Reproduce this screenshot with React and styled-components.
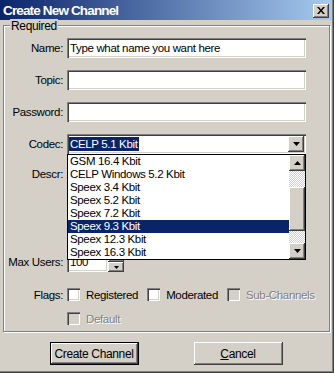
import React from "react";
import styled, { createGlobalStyle, css } from "styled-components";

const GlobalStyle = createGlobalStyle`
  html, body { margin: 0; padding: 0; background: #d4d0c8; }
  body { font-family: "Liberation Sans", Arial, sans-serif; }
  * { box-sizing: border-box; }
`;

const sunken = css`
  box-shadow: inset 1px 1px #808080, inset 2px 2px #404040,
    inset -1px -1px #fff, inset -2px -2px #d4d0c8;
`;
const raised = css`
  box-shadow: inset -1px -1px #404040, inset 1px 1px #fff,
    inset -2px -2px #808080, inset 2px 2px #d4d0c8;
`;

const Window = styled.div`
  width: 334px;
  height: 373px;
  background: #d4d0c8;
  padding: 0 2px 2px 0;
  box-shadow: inset -1px -1px #404040, inset -2px -2px #808080;
  display: flex;
  flex-direction: column;
  font-size: 11.5px;
  letter-spacing: -0.35px;
  color: #000;
`;

const TitleBar = styled.div`
  height: 20px;
  flex: none;
  display: flex;
  align-items: center;
  justify-content: space-between;
  padding: 0 3px 0 3px;
  background: linear-gradient(to right, #0a246a, #a6caf0);
`;

const Title = styled.span`
  color: #fff;
  font-weight: bold;
  font-size: 13.5px;
  letter-spacing: -0.85px;
`;

const CloseButton = styled.div`
  width: 16px;
  height: 14px;
  margin-top: 1px;
  background: #d4d0c8;
  ${raised};
  display: flex;
  align-items: center;
  justify-content: center;
`;

const Group = styled.div`
  margin: 5px 2px 0 3px;
  border: 1px solid #808080;
  box-shadow: inset 1px 1px #fff, 1px 1px #fff;
  padding: 0 0 6px 1px;
`;

const Legend = styled.div`
  width: fit-content;
  margin: -7px 0 0 5px;
  padding: 0 1px;
  background: #d4d0c8;
  line-height: 14px;
  font-size: 12px;
`;

const Form = styled.div`
  display: flex;
  flex-direction: column;
  margin-top: 5px;
`;

const Row = styled.div`
  display: flex;
  align-items: ${(p) => (p.$top ? "flex-start" : "center")};
  gap: 4px;
  margin-top: ${(p) => p.$mt || 0}px;
`;

const Label = styled.div`
  width: 58px;
  flex: none;
  text-align: right;
  padding-top: ${(p) => (p.$top ? 2 : 0)}px;
  white-space: nowrap;
`;

const TextField = styled.div`
  width: ${(p) => p.$w || 239}px;
  height: ${(p) => p.$h || 20}px;
  background: #fff;
  ${sunken};
  padding: 0 3px;
  line-height: 20px;
  white-space: nowrap;
  overflow: hidden;
`;

const Combo = styled.div`
  position: relative;
  width: 239px;
  height: 20px;
  background: #fff;
  ${sunken};
  display: flex;
  align-items: center;
  padding: 2px;
`;

const ComboValue = styled.div`
  flex: 1;
  display: flex;
  align-items: center;
`;

const Highlight = styled.span`
  background: #0a246a;
  color: #fff;
  height: 14px;
  line-height: 14px;
  padding: 0 2px 0 1px;
`;

const ArrowButton = styled.div`
  width: 16px;
  height: ${(p) => p.$h || 16}px;
  flex: none;
  background: #d4d0c8;
  ${raised};
  display: flex;
  align-items: center;
  justify-content: center;
`;

const DropList = styled.div`
  position: absolute;
  top: 20px;
  left: 0;
  width: 239px;
  height: 106px;
  border: 1px solid #000;
  background: #fff;
  display: flex;
  z-index: 2;
`;

const Items = styled.div`
  flex: 1;
  display: flex;
  flex-direction: column;
`;

const Item = styled.div`
  height: 13px;
  line-height: 13px;
  padding-left: 2px;
  white-space: nowrap;
  background: ${(p) => (p.$selected ? "#0a246a" : "transparent")};
  color: ${(p) => (p.$selected ? "#fff" : "#000")};
`;

const ScrollBar = styled.div`
  width: 16px;
  display: flex;
  flex-direction: column;
`;

const Track = styled.div`
  flex: 1;
  background: repeating-conic-gradient(#d4d0c8 0 25%, #fff 0 50%) 0 0 / 2px 2px;
`;

const Thumb = styled.div`
  margin-top: 16px;
  height: 44px;
  background: #d4d0c8;
  ${raised};
`;

const Spin = styled.div`
  display: flex;
  align-items: flex-end;
`;

const SpinButtons = styled.div`
  display: flex;
  flex-direction: column;
  width: 14px;
`;

const Checks = styled.div`
  display: flex;
  align-items: center;
  gap: 9px;
  white-space: nowrap;
`;

const Check = styled.label`
  display: flex;
  align-items: center;
  gap: 6px;
  color: ${(p) => (p.$disabled ? "#808080" : "#000")};
  text-shadow: ${(p) => (p.$disabled ? "1px 1px #fff" : "none")};
`;

const Box = styled.span`
  width: 13px;
  height: 13px;
  flex: none;
  background: ${(p) => (p.$disabled ? "#d4d0c8" : "#fff")};
  ${sunken};
`;

const Buttons = styled.div`
  display: flex;
  justify-content: center;
  gap: 55px;
  margin-top: 10px;
`;

const Button = styled.div`
  width: 89px;
  height: 23px;
  background: #d4d0c8;
  ${raised};
  border: ${(p) => (p.$default ? "1px solid #000" : "none")};
  display: flex;
  align-items: center;
  justify-content: center;
  white-space: nowrap;
  font-size: 12px;
`;

const Arrow = ({ up }) => (
  <svg width="7" height="4" viewBox="0 0 7 4">
    <polygon points={up ? "3.5,0 7,4 0,4" : "0,0 7,0 3.5,4"} fill="#000" />
  </svg>
);

const SmallArrow = () => (
  <svg width="5" height="3" viewBox="0 0 5 3">
    <polygon points="0,0 5,0 2.5,3" fill="#000" />
  </svg>
);

const codecs = [
  "GSM 16.4 Kbit",
  "CELP Windows 5.2 Kbit",
  "Speex 3.4 Kbit",
  "Speex 5.2 Kbit",
  "Speex 7.2 Kbit",
  "Speex 9.3 Kbit",
  "Speex 12.3 Kbit",
  "Speex 16.3 Kbit",
];

export default function App() {
  return (
    <>
      <GlobalStyle />
      <Window>
        <TitleBar>
          <Title>Create New Channel</Title>
          <CloseButton>
            <svg width="8" height="7" viewBox="0 0 8 7">
              <path d="M0 0h2l2 2.5L6 0h2L5 3.5 8 7H6L4 4.5 2 7H0l3-3.5z" fill="#000" />
            </svg>
          </CloseButton>
        </TitleBar>
        <Group>
          <Legend>Required</Legend>
          <Form>
            <Row>
              <Label>Name:</Label>
              <TextField>Type what name you want here</TextField>
            </Row>
            <Row $mt={12}>
              <Label>Topic:</Label>
              <TextField />
            </Row>
            <Row $mt={12}>
              <Label>Password:</Label>
              <TextField />
            </Row>
            <Row $mt={12}>
              <Label>Codec:</Label>
              <Combo>
                <ComboValue>
                  <Highlight>CELP 5.1 Kbit</Highlight>
                </ComboValue>
                <ArrowButton>
                  <Arrow />
                </ArrowButton>
                <DropList>
                  <Items>
                    {codecs.map((c) => (
                      <Item key={c} $selected={c === "Speex 9.3 Kbit"}>
                        {c}
                      </Item>
                    ))}
                  </Items>
                  <ScrollBar>
                    <ArrowButton>
                      <Arrow up />
                    </ArrowButton>
                    <Track>
                      <Thumb />
                    </Track>
                    <ArrowButton>
                      <Arrow />
                    </ArrowButton>
                  </ScrollBar>
                </DropList>
              </Combo>
            </Row>
            <Row $mt={12} $top>
              <Label $top>Descr:</Label>
              <TextField $h={74} />
            </Row>
            <Row $mt={12}>
              <Label>Max Users:</Label>
              <Spin>
                <TextField $w={41}>100</TextField>
                <SpinButtons>
                  <ArrowButton $h={10} />
                  <ArrowButton $h={10}>
                    <SmallArrow />
                  </ArrowButton>
                </SpinButtons>
              </Spin>
            </Row>
            <Row $mt={16}>
              <Label>Flags:</Label>
              <Checks>
                <Check>
                  <Box />
                  Registered
                </Check>
                <Check>
                  <Box />
                  Moderated
                </Check>
                <Check $disabled>
                  <Box $disabled />
                  Sub-Channels
                </Check>
              </Checks>
            </Row>
            <Row $mt={11}>
              <Label />
              <Checks>
                <Check $disabled>
                  <Box $disabled />
                  Default
                </Check>
              </Checks>
            </Row>
          </Form>
        </Group>
        <Buttons>
          <Button $default>Create Channel</Button>
          <Button>
            <span>
              <u>C</u>ancel
            </span>
          </Button>
        </Buttons>
      </Window>
    </>
  );
}
